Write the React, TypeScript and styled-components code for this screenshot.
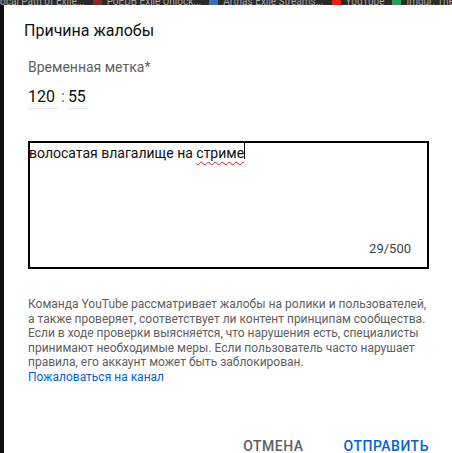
import styled, { createGlobalStyle } from 'styled-components';

const GlobalStyle = createGlobalStyle`
  html, body {
    margin: 0;
    padding: 0;
    background: #111;
  }
  body {
    font-family: Roboto, "Noto Sans", Arial, sans-serif;
  }
`;

const Page = styled.div`
  width: 452px;
  height: 453px;
  overflow: hidden;
  display: flex;
  flex-direction: column;
  background: #111;
`;

const BookmarkBar = styled.div`
  height: 5px;
  flex: none;
  overflow: hidden;
  display: flex;
  align-items: flex-end;
  gap: 8px;
  background: #2a2a2a;
`;

const Bookmark = styled.div`
  display: flex;
  align-items: center;
  gap: 5px;
  flex: none;
  height: 12px;
  margin-bottom: -3px;
  font-size: 10px;
  line-height: 12px;
  color: #a8a8a8;
  white-space: nowrap;
`;

const Favicon = styled.span<{ $color: string }>`
  width: 9px;
  height: 9px;
  border-radius: 2px;
  background: ${(p) => p.$color};
`;

const Body = styled.div`
  flex: 1;
  display: flex;
  min-height: 0;
`;

const LeftEdge = styled.div`
  width: 4px;
  flex: none;
  background: #0d0d0d;
`;

const Dialog = styled.div`
  flex: 1;
  display: flex;
  flex-direction: column;
  background: #fff;
`;

const Title = styled.h2`
  margin: 0;
  padding: 16px 20px 0;
  font-size: 16px;
  line-height: 20px;
  font-weight: 400;
  color: #0f0f0f;
`;

const Content = styled.div`
  padding: 16px 24px 0;
  display: flex;
  flex-direction: column;
`;

const Label = styled.div`
  font-size: 14px;
  line-height: 20px;
  color: #606060;
`;

const TimeRow = styled.div`
  margin-top: 10px;
  display: flex;
  align-items: flex-start;
  gap: 3px;
  font-size: 16px;
  line-height: 20px;
  color: #0f0f0f;
`;

const TimeField = styled.div<{ $width: number }>`
  width: ${(p) => p.$width}px;
  height: 21px;
  border-bottom: 1px solid #e3e3e3;
`;

const Colon = styled.span`
  color: #606060;
`;

const TextBox = styled.div`
  margin-top: 32px;
  margin-right: -1px;
  height: 124px;
  border: 2px solid #000;
  display: flex;
  flex-direction: column;
  justify-content: space-between;
`;

const Typed = styled.div`
  margin-left: -1px;
  font-size: 14px;
  line-height: 20px;
  color: #0f0f0f;
  display: flex;
  align-items: flex-start;
`;

const Misspelled = styled.span`
  text-decoration: underline wavy #e0201c;
  text-decoration-thickness: 1px;
  text-underline-offset: 3px;
`;

const Caret = styled.span`
  width: 1px;
  height: 17px;
  margin-top: -1px;
  background: #000;
`;

const Counter = styled.div`
  align-self: flex-end;
  padding: 0 16px 10px 0;
  font-size: 13px;
  line-height: 16px;
  color: #404040;
`;

const Info = styled.p`
  margin: 28px 0 0;
  font-size: 12px;
  line-height: 14.5px;
  color: #606060;
  white-space: nowrap;
`;

const Link = styled.a`
  color: #065fd4;
  text-decoration: none;
`;

const Divider = styled.div`
  margin-top: 33px;
  height: 1px;
  background: #e5e5e5;
`;

const Actions = styled.div`
  display: flex;
  justify-content: flex-end;
  gap: 8px;
  padding: 19px 7px 0 0;
`;

const ActionButton = styled.button<{ $primary?: boolean }>`
  border: 0;
  background: none;
  padding: 0 16px;
  font-family: inherit;
  font-size: 14px;
  line-height: 20px;
  font-weight: 500;
  letter-spacing: 0.5px;
  color: ${(p) => (p.$primary ? '#065fd4' : '#606060')};
  cursor: pointer;
`;

const bookmarks = [
  { label: 'ocal Path of Exile...', color: '' },
  { label: 'PoEDB Exile Unlock...', color: '#8a2a1e' },
  { label: 'Arthas Exile Streams...', color: '#3a6fb5' },
  { label: 'YouTube', color: '#e62117' },
  { label: 'Imgur: The most aw...', color: '#2e9b5a' },
  { label: 'Kamal Kiosk — Exe...', color: '#d98a2b' },
  { label: 'IMDb - Movies, TV...', color: '#e2b616' },
];

export default function App() {
  return (
    <Page>
      <GlobalStyle />
      <BookmarkBar>
        {bookmarks.map((b) => (
          <Bookmark key={b.label}>
            {b.color && <Favicon $color={b.color} />}
            {b.label}
          </Bookmark>
        ))}
      </BookmarkBar>
      <Body>
        <LeftEdge />
        <Dialog>
          <Title>Причина жалобы</Title>
          <Content>
            <Label>Временная метка*</Label>
            <TimeRow>
              <TimeField $width={30}>120</TimeField>
              <Colon>:</Colon>
              <TimeField $width={20}>55</TimeField>
            </TimeRow>
            <TextBox>
              <Typed>
                <span>
                  волосатая влагалище на <Misspelled>стриме</Misspelled>
                </span>
                <Caret />
              </Typed>
              <Counter>29/500</Counter>
            </TextBox>
            <Info>
              Команда YouTube рассматривает жалобы на ролики и пользователей,
              <br />
              а также проверяет, соответствует ли контент принципам сообщества.
              <br />
              Если в ходе проверки выясняется, что нарушения есть, специалисты
              <br />
              принимают необходимые меры. Если пользователь часто нарушает
              <br />
              правила, его аккаунт может быть заблокирован.
              <br />
              <Link href="#">Пожаловаться на канал</Link>
            </Info>
          </Content>
          <Divider />
          <Actions>
            <ActionButton>ОТМЕНА</ActionButton>
            <ActionButton $primary>ОТПРАВИТЬ</ActionButton>
          </Actions>
        </Dialog>
      </Body>
    </Page>
  );
}
